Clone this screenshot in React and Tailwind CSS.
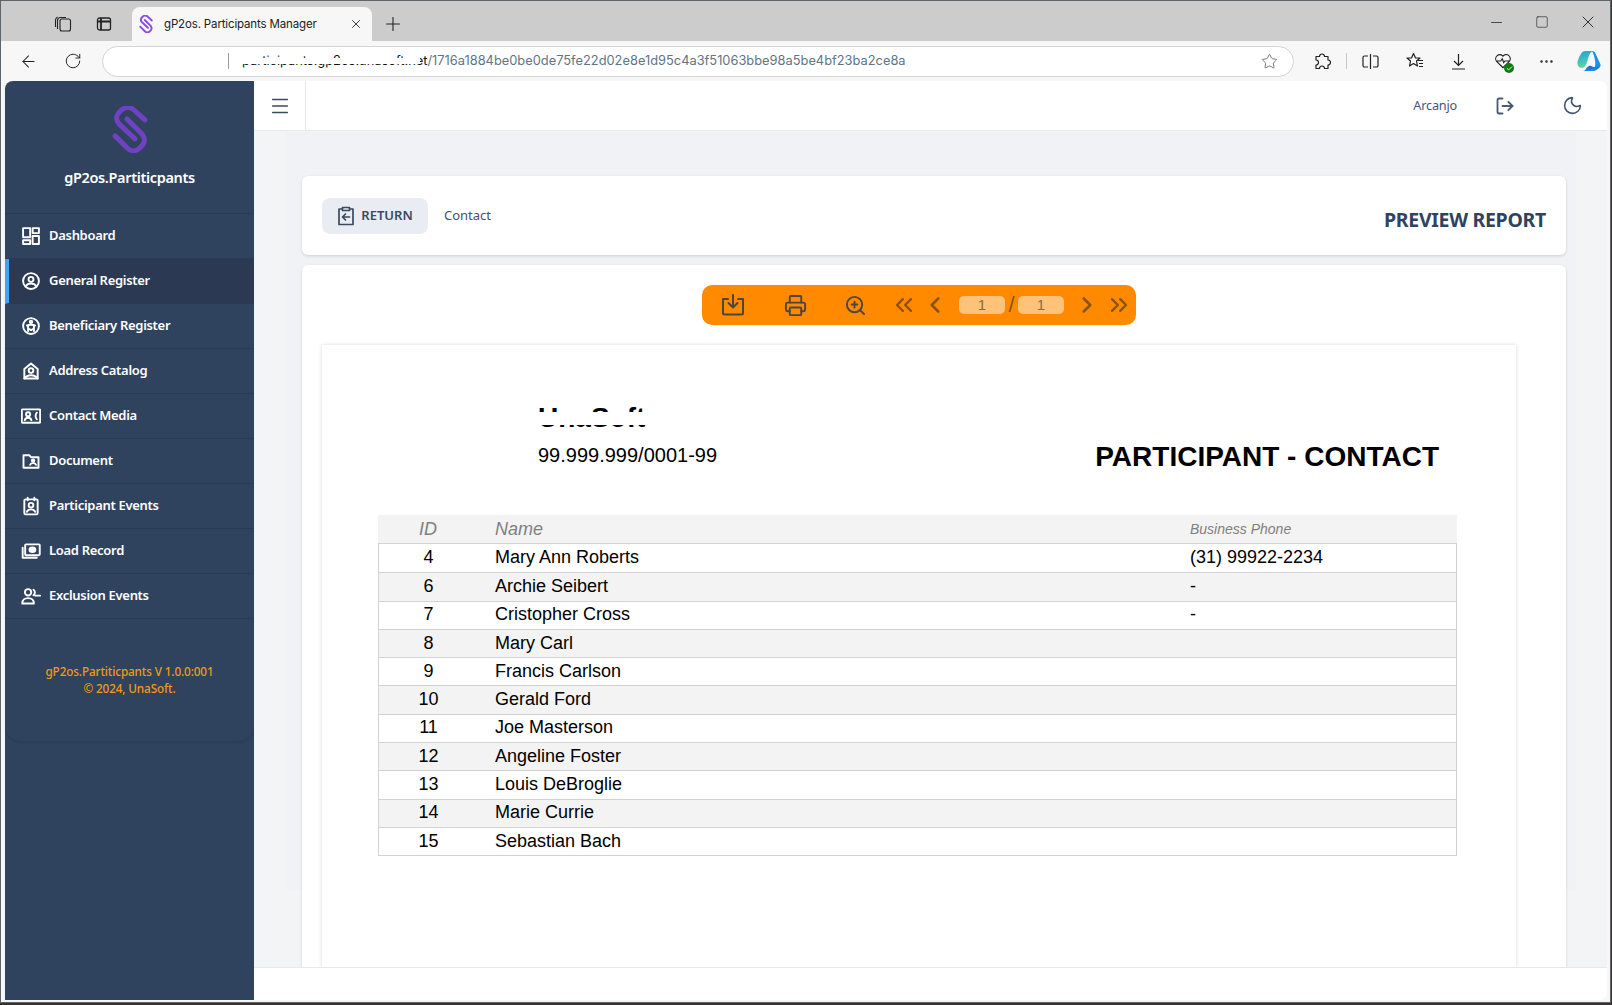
import React from 'react';
import { ArrowLeft, RotateCw, Star, MoreHorizontal, Menu, LogOut, Moon, Plus, X, Minus, Square, Printer, ZoomIn, ChevronsLeft, ChevronLeft, ChevronRight, ChevronsRight, Check } from 'lucide-react';

const sans = "font-['Noto_Sans',sans-serif]";

// sidebar icons, drawn on a 24 box
const Ico = ({ children }) => (
  <svg width="20" height="20" viewBox="0 0 24 24" fill="none" stroke="white" strokeWidth="2.3" strokeLinejoin="round" strokeLinecap="round">
    {children}
  </svg>
);

const menu = [
  { label: 'Dashboard', icon: <Ico><rect x="2.500" y="2.500" width="8.500" height="11" /><rect x="14" y="2.500" width="7.500" height="6" /><rect x="2.500" y="17" width="8.500" height="4.500" /><rect x="14" y="12" width="7.500" height="9.500" /></Ico> },
  { label: 'General Register', active: true, icon: <Ico><circle cx="12" cy="12" r="9.500" /><circle cx="12" cy="10" r="3" /><path d="M5.500 18.500c1.500-2.500 4-3.500 6.500-3.500s5 1 6.500 3.500" /></Ico> },
  { label: 'Beneficiary Register', icon: <Ico><circle cx="12" cy="12" r="9.500" /><circle cx="12" cy="7" r="1.500" /><path d="M7 11.500c1.500-1 3-1 5-1s3.500 0 5 1M8.500 12v6M15.500 12v6M8.500 15l3.500 2 3.500-2" /></Ico> },
  { label: 'Address Catalog', icon: <Ico><path d="M4 21V9.500L12 3l8 6.500V21z" /><circle cx="12" cy="11.500" r="2.800" /><path d="M4 21c2-3 5-4 8-4s6 1 8 4" /></Ico> },
  { label: 'Contact Media', icon: <Ico><rect x="1" y="4" width="22" height="16" rx="1" /><circle cx="8.500" cy="10" r="2.500" /><path d="M4.500 17c.5-2 2-3 4-3s3.500 1 4 3M19 8c-2 2-2 6 0 8" /></Ico> },
  { label: 'Document', icon: <Ico><path d="M3 5h7l2 2.500h9V20H3z" /><circle cx="14.500" cy="11.500" r="1.500" fill="white" /><path d="M11 16.500c.5-1.500 2-2 3.500-2s3 .5 3.500 2" /></Ico> },
  { label: 'Participant Events', icon: <Ico><rect x="4" y="4" width="16" height="18" rx="1.500" /><path d="M8 2v3M16 2v3" /><circle cx="12" cy="11" r="2.800" /><path d="M7 19c.8-2 2.800-3 5-3s4.200 1 5 3" /></Ico> },
  { label: 'Load Record', icon: <Ico><rect x="5" y="4" width="17.500" height="13" rx="1" /><path d="M2 8v12h17" /><ellipse cx="13.700" cy="10.500" rx="3.500" ry="2.800" fill="white" /></Ico> },
  { label: 'Exclusion Events', icon: <Ico><circle cx="8.500" cy="7.500" r="3.800" /><path d="M1.500 21c0-4 3-6.500 7-6.500s7 2.500 7 6.500z" /><path d="M15 4.500a4 4 0 0 1 0 6.500M17 11.500h6" /></Ico> },
];

const rows = [
  ['4', 'Mary Ann Roberts', '(31) 99922-2234'],
  ['6', 'Archie Seibert', '-'],
  ['7', 'Cristopher Cross', '-'],
  ['8', 'Mary Carl', ''],
  ['9', 'Francis Carlson', ''],
  ['10', 'Gerald Ford', ''],
  ['11', 'Joe Masterson', ''],
  ['12', 'Angeline Foster', ''],
  ['13', 'Louis DeBroglie', ''],
  ['14', 'Marie Currie', ''],
  ['15', 'Sebastian Bach', ''],
];

const Logo = ({ size = 36, stroke = '#6f42c1' }) => (
  <svg width={size} height={size * 1.3} viewBox="0 0 36 47" fill="none" stroke={stroke} strokeWidth="5" strokeLinecap="round" strokeLinejoin="round">
    <path d="M33 14 L22 4 C18 0.500 13 1 9 4.500 C4 9 3 13 7 18 L23 33" />
    <path d="M3 30 L15 42 C19 46 24 46 28 42 C33 38 34 33 30 28 L15 13" />
  </svg>
);

const Chrome = () => (
  <div className="flex flex-col">
    {/* tab strip */}
    <div className="h-[40px] bg-[#cccccc] flex items-end">
      <div className="w-[131px] h-full flex items-center pt-[6px]">
        <svg className="ml-[53px]" width="18" height="18" viewBox="0 0 18 18" fill="none" stroke="#222" strokeWidth="1.100">
          <rect x="6" y="4" width="10.500" height="12" rx="2" /><path d="M3.500 14V5.500a3 3 0 0 1 3-3H12M1.500 12V5a4 4 0 0 1 2-3" />
        </svg>
        <svg className="ml-[24px]" width="16" height="16" viewBox="0 0 16 16" fill="none" stroke="#222" strokeWidth="1.300">
          <rect x="1.500" y="2" width="13" height="12" rx="2" /><path d="M1.500 5.500h13M5 2v12" strokeWidth="1.800" />
        </svg>
      </div>
      <div className="w-[240px] h-[34px] bg-[#f7f7f7] rounded-t-lg flex items-center">
        <span className="ml-[7px] flex items-center"><Logo size={14} stroke="#8a4fe0" /></span>
        <span className="ml-[11px] pt-[1px] text-[11.500px] text-[#222] font-['Inter',sans-serif] tracking-[-0.15px] w-[185px] whitespace-nowrap">gP2os. Participants Manager</span>
        <X size={14} strokeWidth={1.500} className="text-[#222]" />
      </div>
      <div className="h-full flex items-center ml-[10px] pt-[6px]"><Plus size={22} strokeWidth={1.200} className="text-[#222]" /></div>
      <div className="ml-auto h-full flex items-center gap-[4px] pr-[1px] pt-[2px] text-[#222]">
        <span className="w-[42px] flex justify-center"><Minus size={17} strokeWidth={1.100} /></span>
        <span className="w-[42px] flex justify-center"><Square size={14} strokeWidth={1.100} /></span>
        <span className="w-[42px] flex justify-center"><X size={20} strokeWidth={1.100} /></span>
      </div>
    </div>
    {/* address bar */}
    <div className="h-[40px] bg-[#f7f7f7] flex items-center text-[#222]">
      <ArrowLeft size={19} strokeWidth={1.300} className="ml-[18px]" />
      <RotateCw size={18} strokeWidth={1.300} className="ml-[26px]" />
      <div className="ml-[20px] w-[1192px] h-[31px] bg-white rounded-full border border-[#d4d4d4] flex items-center relative">
        <span className="ml-[125px] w-px h-[16px] bg-[#999]" />
        <span className="ml-[13px] text-[12.850px] font-['Inter',sans-serif] text-[#111] whitespace-nowrap">participants.gp2os.unasoft.net</span>
        <span className="text-[12.850px] font-['Inter',sans-serif] text-[#5f7585] whitespace-nowrap">/1716a1884be0be0de75fe22d02e8e1d95c4a3f51063bbe98a5be4bf23ba2ce8a</span>
        {/* redaction band across the host name */}
        <div className="absolute left-[137px] top-[11px] w-[180px] h-[6px] bg-white" />
        <Star size={17} strokeWidth={1.100} className="absolute right-[15px] top-[6px] text-[#555]" />
      </div>
      <svg className="ml-[19px]" width="18" height="18" viewBox="0 0 18 18" fill="none" stroke="#222" strokeWidth="1.200" strokeLinejoin="round">
        <path d="M3 4.500h3.500a2.500 2.500 0 1 1 5 0H15V8a2.500 2.500 0 1 1 0 5v3.500h-3.500a2.500 2.500 0 1 0-5 0H3V13a2.500 2.500 0 1 0 0-5z" />
      </svg>
      <span className="ml-[15px] w-px h-[16px] bg-[#c8c8c8]" />
      <svg className="ml-[15px]" width="17" height="17" viewBox="0 0 17 17" fill="none" stroke="#222" strokeWidth="1.200">
        <path d="M6 3H2.500a1.500 1.500 0 0 0-1.500 1.500v8A1.500 1.500 0 0 0 2.500 14H6M11 3h3.500A1.500 1.500 0 0 1 16 4.500v8a1.500 1.500 0 0 1-1.500 1.500H11M8.500 1v15" />
      </svg>
      <svg className="ml-[27px]" width="18" height="18" viewBox="0 0 18 18" fill="none" stroke="#222" strokeWidth="1.200" strokeLinejoin="round">
        <path d="M7.500 1.500 9.500 6H14l-3.500 3 1 5-4-2.500-4 2.500 1-5L1 6h4.500zM12 8.500h5M13 11.500h4M13 14.500h4" />
      </svg>
      <svg className="ml-[26px]" width="17" height="17" viewBox="0 0 17 17" fill="none" stroke="#222" strokeWidth="1.200">
        <path d="M8.500 1v11M4 8l4.500 4.500L13 8M2 16h13" />
      </svg>
      <span className="relative ml-[27px]">
        <svg width="18" height="18" viewBox="0 0 24 24" fill="none" stroke="#222" strokeWidth="1.500">
          <path d="M12 21 3.500 12.500a5.500 5.500 0 0 1 8.500-7 5.500 5.500 0 0 1 8.500 7L12 21zM4 12h5l2-3 2 5 1.500-2H20" />
        </svg>
        <span className="absolute -right-[2px] -bottom-[3px] w-[10px] h-[10px] rounded-full bg-[#107c10] flex items-center justify-center">
          <Check size={7} strokeWidth={3} className="text-white" />
        </span>
      </span>
      <MoreHorizontal size={17} strokeWidth={1.500} className="ml-[26px]" />
      <svg className="ml-[22px]" width="24" height="24" viewBox="0 0 24 24">
        <defs>
          <linearGradient id="cpA" x1="0" y1="0" x2="0.300" y2="1"><stop offset="0" stopColor="#1e9fe0" /><stop offset="1" stopColor="#5fd6a0" /></linearGradient>
          <linearGradient id="cpB" x1="0" y1="0" x2="0.500" y2="1"><stop offset="0" stopColor="#1d4fd0" /><stop offset="1" stopColor="#2a8de8" /></linearGradient>
        </defs>
        <path d="M8 2h8c-2.500 1-3.500 3-4.500 6-1 3.500-2 9-5 10.500-2 1-5.500 0-6-3.500C0 12 3 6 4.500 4 5.500 2.800 6.500 2 8 2z" fill="url(#cpA)" />
        <path d="M15 2c2 0 3 1 3.500 2.500l5 11c.5 2.500-2 4.500-4 4.500h-3c2.500-2 2-7.500 1-11-.5-3-1.500-5-2.500-7z" fill="#1e90e8" />
        <path d="M6.500 22h9.500c3 0 5.500-2 6-5-2.500 1.500-6 1.500-8 0-1.500-1-3 .5-4 1.500-1 1.500-2 3-3.500 3.500z" fill="url(#cpB)" />
      </svg>
    </div>
  </div>
);

const Sidebar = () => (
  <aside className={`w-[249px] shrink-0 bg-[#30435e] rounded-tl-lg flex flex-col ${sans}`}>
    <div className="rounded-b-2xl shadow-[0_2px_2px_rgba(0,0,0,0.1)] h-[660px] flex flex-col">
      <div className="h-[133px] flex flex-col items-center border-b border-[#293a52]">
        <div className="mt-[25px] h-[46px]"><Logo /></div>
        <div className="mt-[15px] text-white font-semibold text-[14.500px] tracking-[-0.35px]">gP2os.Partiticpants</div>
      </div>
      {menu.map((m) => (
        <div
          key={m.label}
          className={`h-[45px] shrink-0 flex items-center border-b border-[#293a52] ${m.active ? 'bg-[#2b3a52] border-l-4 border-l-[#3da5f4] pl-[12px]' : 'pl-[16px]'}`}
        >
          <span className="w-[28px] flex">{m.icon}</span>
          <span className="text-white font-semibold text-[13px] tracking-[-0.3px]">{m.label}</span>
        </div>
      ))}
      <div className="mt-[44px] text-center text-[#f39a12] font-medium text-[11.700px] leading-[17px] tracking-[-0.1px]">
        <div>gP2os.Partiticpants V 1.0.0:001</div>
        <div>© 2024, UnaSoft.</div>
      </div>
    </div>
  </aside>
);

const Toolbar = () => (
  <div className="ml-[400px] w-[434px] h-[40px] shrink-0 bg-[#ff8a00] rounded-[10px] flex items-center font-['Liberation_Sans',sans-serif]">
    <svg className="ml-[19px]" width="24" height="22" viewBox="0 0 24 22" fill="none" stroke="#4d4640" strokeWidth="2" strokeLinecap="round" strokeLinejoin="round">
      <path d="M7 5H2v14a1.500 1.500 0 0 0 1.500 1.500h17A1.500 1.500 0 0 0 22 19V5h-5M12 1v12M7.500 9l4.500 4.500L16.500 9" />
    </svg>
    <Printer size={23} strokeWidth={2} className="ml-[39px] text-[#4d4640]" />
    <ZoomIn size={23} strokeWidth={2} className="ml-[37px] text-[#4d4640]" />
    <ChevronsLeft size={28} strokeWidth={2} className="ml-[23px] text-[#8a5314]" />
    <ChevronLeft size={26} strokeWidth={2.400} className="ml-[4px] text-[#8a5314]" />
    <div className="ml-[11px] w-[46px] h-[18px] rounded-[5px] bg-[#ffc27a] text-[#8a6a40] text-[15px] flex items-center justify-center">1</div>
    <span className="w-[13px] text-center text-[#8a5314] text-[22px] leading-none">/</span>
    <div className="w-[46px] h-[18px] rounded-[5px] bg-[#ffc27a] text-[#8a6a40] text-[15px] flex items-center justify-center">1</div>
    <ChevronRight size={26} strokeWidth={2.400} className="ml-[10px] text-[#8a5314]" />
    <ChevronsRight size={28} strokeWidth={2} className="ml-[5px] text-[#8a5314]" />
  </div>
);

const ReportTable = () => (
  <div className="ml-[56px] mr-[59px] text-black text-[18px]">
    <div className="h-[28px] bg-[#f3f3f3] flex items-center italic text-[#808080]">
      <div className="w-[100px] text-center">ID</div>
      <div className="ml-[17px] w-[695px]">Name</div>
      <div className="text-[14px]">Business Phone</div>
    </div>
    <div className="border border-[#d2d2d2]">
      {rows.map((r, i) => (
        <div key={r[0]} className={`h-[28.300px] pb-[1px] flex items-center border-t border-[#d2d2d2] first:border-t-0 ${i % 2 ? 'bg-[#f3f3f3]' : 'bg-white'}`}>
          <div className="w-[99px] text-center">{r[0]}</div>
          <div className="ml-[17px] w-[695px]">{r[1]}</div>
          <div>{r[2]}</div>
        </div>
      ))}
    </div>
  </div>
);

export default function App() {
  return (
    <div className="w-[1612px] h-[1005px] overflow-hidden bg-[#3a3230] font-['Liberation_Sans',sans-serif]">
      <div className="w-[1611px] h-[1003px] flex flex-col border-t border-l border-r border-b border-[#5f6468] bg-[#f7f7f7] overflow-hidden">
        <Chrome />
        <div className="h-[919px] shrink-0 flex pl-[4px] pr-[3px] overflow-hidden">
          <Sidebar />
          <div className="flex-1 min-w-0 flex flex-col bg-white rounded-tr-lg rounded-br-lg overflow-hidden">
            <header className={`h-[50px] shrink-0 bg-white border-b border-[#e8e9ec] flex items-center ${sans}`}>
              <div className="w-[52px] h-full border-r border-[#e8e9ec] flex items-center justify-center">
                <Menu size={22} strokeWidth={1.700} className="text-[#3a4a63]" />
              </div>
              <span className="ml-auto text-[12.700px] text-[#42597c] tracking-[-0.2px]">Arcanjo</span>
              <LogOut size={20} strokeWidth={2.200} className="ml-[38px] text-[#4a5a72]" />
              <Moon size={21} strokeWidth={1.800} className="ml-[47px] mr-[24px] text-[#3e5373]" />
            </header>
            <main className="flex-1 min-h-0 bg-[#f3f4f6] pl-[32px] pr-[31px] overflow-hidden">
              <div className="h-[759px] bg-[#f1f2f5] pt-[45px] px-[16px] pr-[10px] flex flex-col gap-[10px]">
                <section className={`h-[79px] shrink-0 bg-white rounded-md shadow-[0_1px_3px_rgba(0,0,0,0.15)] flex items-center pl-[20px] pr-[20px] ${sans}`}>
                  <button className="w-[106px] h-[36px] bg-[#e9ecf2] rounded-lg flex items-center justify-center gap-[6px] text-[#3a4a63] font-semibold text-[13px]">
                    <svg width="18" height="20" viewBox="0 0 18 20" fill="none" stroke="#3a4a63" strokeWidth="1.700" strokeLinejoin="round" strokeLinecap="round">
                      <path d="M5.500 3H2v15.500h14V3h-3.500M5.500 1.500h7V4.500h-7zM12.500 11h-7M8.500 8 5.500 11l3 3" />
                    </svg>
                    RETURN
                  </button>
                  <span className="ml-[16px] text-[13px] text-[#42526e]">Contact</span>
                  <span className="ml-auto text-[19.500px] font-bold text-[#30435e] tracking-[-0.3px] mt-[8px]">PREVIEW REPORT</span>
                </section>
                <section className="h-[702px] shrink-0 bg-white rounded-t-md shadow-[0_1px_3px_rgba(0,0,0,0.15)] flex flex-col pt-[20px] overflow-hidden">
                  <Toolbar />
                  <div className="ml-[20px] w-[1194px] flex-1 mt-[20px] bg-white shadow-[0_0_4px_rgba(0,0,0,0.15)]">
                    <div className="h-[170px] flex relative">
                      <div className="ml-[216px] mt-[52px]">
                        <div className="h-[30px] text-[28px] font-bold leading-[41px] overflow-hidden">UnaSoft</div>
                        <div className="text-[20px] leading-[24px] mt-[16px]">99.999.999/0001-99</div>
                      </div>
                      {/* white band hiding the middle of the company name */}
                      <div className="absolute left-[210px] top-[67px] w-[120px] h-[13px] bg-white" />
                      <div className="ml-auto mr-[77px] mt-[95px] text-[28px] font-bold leading-[34px] whitespace-nowrap">PARTICIPANT - CONTACT</div>
                    </div>
                    <ReportTable />
                  </div>
                </section>
              </div>
            </main>
            <footer className="h-[33px] shrink-0 bg-white border-t border-[#e8e9ec]" />
          </div>
        </div>
      </div>
    </div>
  );
}
